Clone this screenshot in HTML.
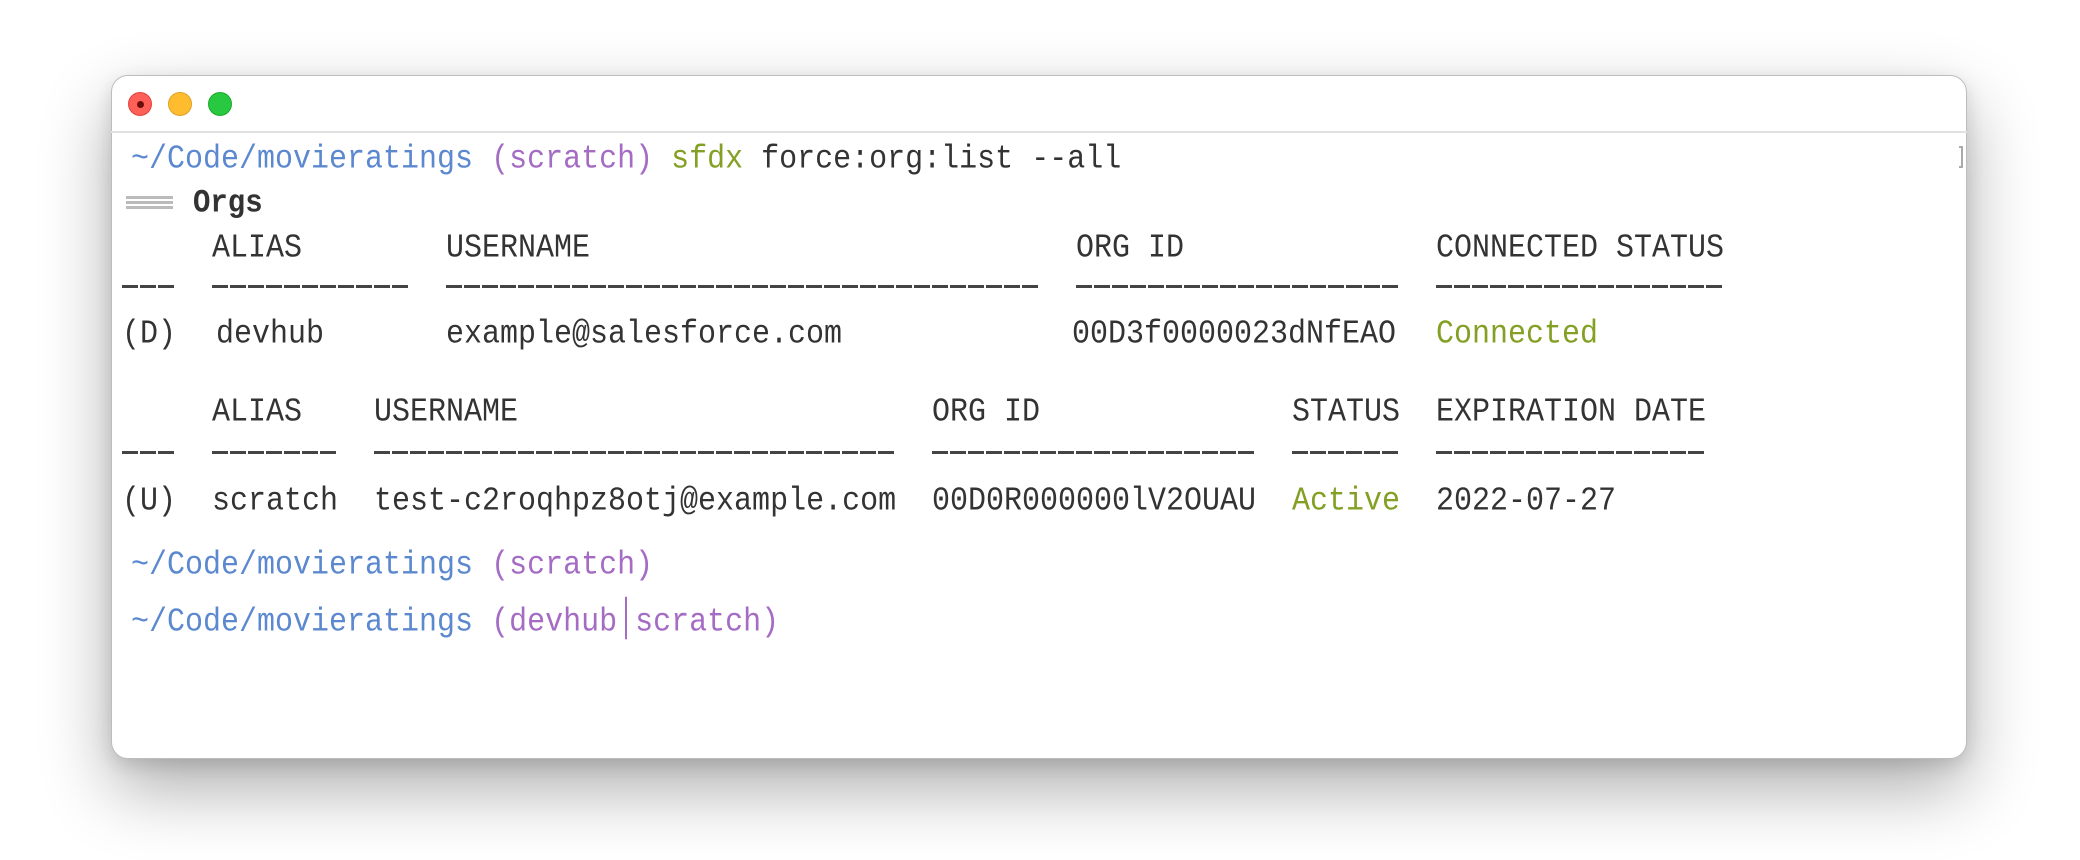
<!DOCTYPE html>
<html><head><meta charset="utf-8"><style>
html,body{margin:0;padding:0;width:2080px;height:860px;background:#fff;overflow:hidden}
.win{position:absolute;left:111px;top:75px;width:1856px;height:684px;border:1px solid #bdbdbd;border-radius:17px;background:#fff;box-shadow:0 30px 70px rgba(0,0,0,0.32),0 6px 18px rgba(0,0,0,0.12);box-sizing:border-box}
.bar{position:absolute;left:111px;top:131px;width:1856px;height:2px;background:#e1e1e1}
.dot{position:absolute;top:92px;width:24px;height:24px;border-radius:50%;box-sizing:border-box}
.t{position:absolute;font-family:"Liberation Mono",monospace;font-size:30px;line-height:40px;color:#333;white-space:pre;transform:translateY(2px) scaleY(1.12);transform-origin:0 60%}
.b{color:#5b88cf}.p{color:#a56cc4}.g{color:#83a024}
.u{position:absolute;height:3px;background:repeating-linear-gradient(90deg,#444 0,#444 16px,transparent 16px,transparent 18px)}
</style></head><body>
<div class="win"></div>
<div class="bar"></div>
<div class="dot" style="left:128px;background:#fe5f57;border:1px solid #e0443e"><div style="position:absolute;left:8px;top:8px;width:7px;height:7px;border-radius:50%;background:#6b0e0b"></div></div>
<div class="dot" style="left:168px;background:#febc2e;border:1px solid #dea123"></div>
<div class="dot" style="left:208px;background:#28c840;border:1px solid #1aab29"></div>

<div class="t" style="left:131px;top:138px"><span class="b">~/Code/movieratings</span> <span class="p">(scratch)</span> <span class="g">sfdx</span> force:org:list --all</div>
<div style="position:absolute;left:1959px;top:146px;width:4px;height:22px;border:2px solid #aaa;border-left:none;box-sizing:border-box"></div>

<div style="position:absolute;left:126px;top:196px;width:47px;height:3px;background:#bbb"></div>
<div style="position:absolute;left:126px;top:201px;width:47px;height:3px;background:#bbb"></div>
<div style="position:absolute;left:126px;top:206px;width:47px;height:3px;background:#bbb"></div>
<div class="t" style="left:193px;top:182px;font-weight:bold;font-size:29px;color:#333">Orgs</div>

<div class="t" style="left:212px;top:227px">ALIAS</div>
<div class="t" style="left:446px;top:227px">USERNAME</div>
<div class="t" style="left:1076px;top:227px">ORG ID</div>
<div class="t" style="left:1436px;top:227px">CONNECTED STATUS</div>
<div class="u" style="left:122px;top:285px;width:52px"></div>
<div class="u" style="left:212px;top:285px;width:196px"></div>
<div class="u" style="left:446px;top:285px;width:592px"></div>
<div class="u" style="left:1076px;top:285px;width:322px"></div>
<div class="u" style="left:1436px;top:285px;width:286px"></div>
<div class="t" style="left:122px;top:313px">(D)</div>
<div class="t" style="left:216px;top:313px">devhub</div>
<div class="t" style="left:446px;top:313px">example@salesforce.com</div>
<div class="t" style="left:1072px;top:313px">00D3f0000023dNfEAO</div>
<div class="t g" style="left:1436px;top:313px">Connected</div>

<div class="t" style="left:212px;top:391px">ALIAS</div>
<div class="t" style="left:374px;top:391px">USERNAME</div>
<div class="t" style="left:932px;top:391px">ORG ID</div>
<div class="t" style="left:1292px;top:391px">STATUS</div>
<div class="t" style="left:1436px;top:391px">EXPIRATION DATE</div>
<div class="u" style="left:122px;top:451px;width:52px"></div>
<div class="u" style="left:212px;top:451px;width:124px"></div>
<div class="u" style="left:374px;top:451px;width:520px"></div>
<div class="u" style="left:932px;top:451px;width:322px"></div>
<div class="u" style="left:1292px;top:451px;width:106px"></div>
<div class="u" style="left:1436px;top:451px;width:268px"></div>
<div class="t" style="left:122px;top:480px">(U)</div>
<div class="t" style="left:212px;top:480px">scratch</div>
<div class="t" style="left:374px;top:480px">test-c2roqhpz8otj@example.com</div>
<div class="t" style="left:932px;top:480px">00D0R000000lV2OUAU</div>
<div class="t g" style="left:1292px;top:480px">Active</div>
<div class="t" style="left:1436px;top:480px">2022-07-27</div>

<div class="t" style="left:131px;top:544px"><span class="b">~/Code/movieratings</span> <span class="p">(scratch)</span></div>
<div class="t" style="left:131px;top:601px"><span class="b">~/Code/movieratings</span> <span class="p">(devhub<span style="display:inline-block;width:18px;text-align:center;position:relative"><span style="position:absolute;left:8px;top:-30px;width:2px;height:38px;background:#a56cc4"></span></span>scratch)</span></div>
</body></html>
